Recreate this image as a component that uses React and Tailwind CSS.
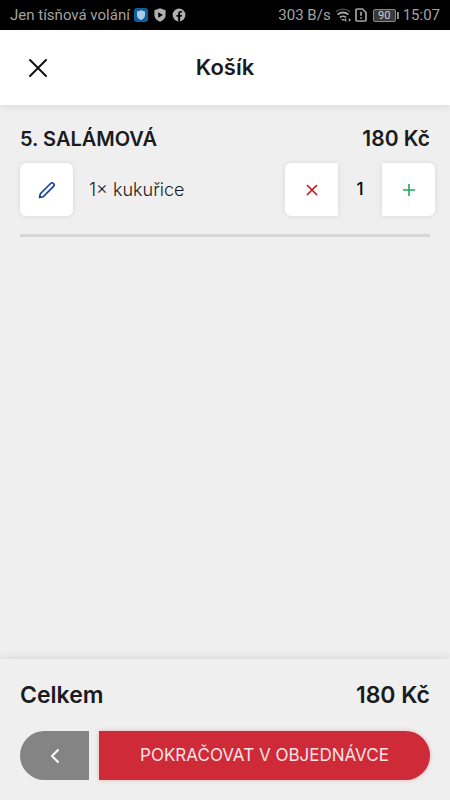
import { useState } from "react";

const PRICE = 180;

// Stavový řádek telefonu
function StatusBar() {
  return (
    <div className="flex h-[30px] items-center justify-between bg-black px-2.5 font-['Roboto',sans-serif] text-[15px] text-[#a3a3a3]">
      <div className="flex items-center">
        <span>Jen tísňová volání</span>
        <svg className="ml-1 h-3.5 w-3.5" viewBox="0 0 14 14">
          <rect width="14" height="14" rx="3" fill="#0f5f9e" />
          <path d="M7 2.2 11 3.6V7c0 2.4-1.6 4-4 5-2.4-1-4-2.6-4-5V3.6Z" fill="#a9cbe4" />
        </svg>
        <svg className="ml-1.5 h-3.5 w-3" viewBox="0 0 12 14">
          <path d="M6 .3 11.6 2.3V7c0 3.200-2.100 5.400-5.600 6.700C2.500 12.400.4 10.200.4 7V2.300Z" fill="#b0b0b0" />
          <path d="M4.200 4.200 9 7 4.200 9.800Z" fill="#000" />
        </svg>
        <svg className="ml-1.5 h-3.5 w-3.5" viewBox="0 0 14 14">
          <circle cx="7" cy="7" r="6.4" fill="#b0b0b0" />
          <path d="M6.200 13.500V8.800H4.500V7h1.700V5.700c0-1.800 1-2.700 2.600-2.700h1.300v1.600H9.200c-.8 0-1.100.4-1.100 1.100V7H10l-.3 1.800H8.100v4.700Z" fill="#000" />
        </svg>
      </div>

      <div className="flex items-center">
        <span>303 B/s</span>
        <svg className="ml-1 h-4 w-4" viewBox="0 0 16 16" fill="none" stroke="#a3a3a3">
          <path d="M1 4.800C5 1.300 11 1.300 15 4.800" stroke="#555" strokeWidth="1.3" />
          <path d="M2.600 7.600c3-2.800 7.800-2.800 10.800 0" strokeWidth="1.8" />
          <path d="M5 10.500c1.700-1.600 4.300-1.600 6 0" strokeWidth="1.8" />
          <path d="m8 14-2-2h4Z" fill="#a3a3a3" stroke="none" />
          <path d="m9 13 2.200-1.900v3.800Zm7 0-2.200-1.900v3.800Z" fill="#a3a3a3" stroke="none" />
        </svg>
        <svg className="ml-1 h-3.5 w-3" viewBox="0 0 12 14" fill="none" stroke="#a3a3a3" strokeWidth="1.7">
          <path d="M2 1h5.500L11 4.500V12a1 1 0 0 1-1 1H2a1 1 0 0 1-1-1V2a1 1 0 0 1 1-1Z" />
          <path d="M6 3.800v4M6 9.200v1.600" />
        </svg>
        <span className="ml-1.5 flex items-center gap-px">
          <span className="flex h-[13px] w-[23px] items-center justify-center rounded-xs border border-[#8a8a8a] bg-[#3a3a3a] text-[11px] leading-none text-[#d0d0d0]">
            90
          </span>
          <span className="h-[7px] w-0.5 bg-[#8a8a8a]" />
        </span>
        <span className="ml-1">15:07</span>
      </div>
    </div>
  );
}

export default function App() {
  const [count, setCount] = useState(1);
  const total = PRICE * count;

  return (
    <div className="flex min-h-screen flex-col bg-[#efefef] font-['Inter',sans-serif] text-[#1a1b1e]">
      <StatusBar />

      <header className="z-10 grid h-[75px] grid-cols-[1fr_auto_1fr] items-center bg-white px-5 shadow-[0_0_10px_rgba(0,0,0,0.12)]">
        <button type="button" aria-label="Zavřít" className="flex h-9 w-9 items-center justify-center">
          <svg className="h-5 w-5" viewBox="0 0 20 20" fill="none" stroke="#111" strokeWidth="2" strokeLinecap="round">
            <path d="m2 2 16 16M18 2 2 18" />
          </svg>
        </button>
        <h1 className="text-[22px] font-semibold">Košík</h1>
      </header>

      <main className="flex-1 pt-5">
        {/* Položka */}
        <div className="flex items-center justify-between px-5 leading-7 font-semibold">
          <h2 className="text-xl">5. SALÁMOVÁ</h2>
          <span className="text-[21px]">{total} Kč</span>
        </div>

        <div className="mt-2.5 flex items-center pr-[15px] pl-5">
          <button type="button" aria-label="Upravit" className="flex h-[53px] w-[53px] items-center justify-center rounded-md bg-white shadow-[0_0_5px_rgba(0,0,0,0.1)]">
            <svg className="h-[18px] w-[18px]" viewBox="0 0 18 18" fill="none" stroke="#1438a6" strokeWidth="1.6" strokeLinejoin="round">
              <path d="M1.500 16.500 2.300 12.800 12.600 2.500a2 2 0 0 1 2.900 2.900L5.200 15.700Z" />
            </svg>
          </button>
          <span className="ml-4 text-lg font-light">1× kukuřice</span>

          <div className="ml-auto flex items-center">
            <button
              type="button"
              aria-label="Odebrat"
              onClick={() => setCount(Math.max(0, count - 1))}
              className="flex h-[53px] w-[53px] items-center justify-center rounded-l-md bg-white shadow-[0_0_5px_rgba(0,0,0,0.1)]"
            >
              <svg className="h-3 w-3" viewBox="0 0 12 12" fill="none" stroke="#c01418" strokeWidth="1.6">
                <path d="m1 1 10 10M11 1 1 11" />
              </svg>
            </button>
            <span className="w-11 text-center text-[17px] font-medium text-black">{count}</span>
            <button
              type="button"
              aria-label="Přidat"
              onClick={() => setCount(count + 1)}
              className="flex h-[53px] w-[53px] items-center justify-center rounded-r-md bg-white shadow-[0_0_5px_rgba(0,0,0,0.1)]"
            >
              <svg className="h-3 w-3" viewBox="0 0 12 12" fill="none" stroke="#22a75c" strokeWidth="1.6">
                <path d="M6 0v12M0 6h12" />
              </svg>
            </button>
          </div>
        </div>

        <hr className="mx-5 mt-[18px] border-t-3 border-[#d6d6d6]" />
      </main>

      {/* Souhrn a tlačítka */}
      <footer className="px-5 pt-5 pb-5 shadow-[0_0_10px_rgba(0,0,0,0.12)]">
        <div className="flex items-center justify-between text-[23px] leading-8 font-semibold">
          <span>Celkem</span>
          <span>{total} Kč</span>
        </div>
        <div className="mt-5 flex gap-2.5">
          <button type="button" aria-label="Zpět" className="flex h-[49px] w-[69px] items-center justify-center rounded-l-full bg-[#848484]">
            <svg className="h-4 w-4" viewBox="0 0 16 16" fill="none" stroke="#fff" strokeWidth="2">
              <path d="M11.500 1.500 5 8l6.500 6.500" />
            </svg>
          </button>
          <button type="button" className="h-[49px] flex-1 rounded-r-full bg-[#ce2a38] text-[17px] font-normal text-[#fbe3e5] shadow-[0_0_4px_rgba(206,42,56,0.3)]">
            POKRAČOVAT V OBJEDNÁVCE
          </button>
        </div>
      </footer>
    </div>
  );
}
